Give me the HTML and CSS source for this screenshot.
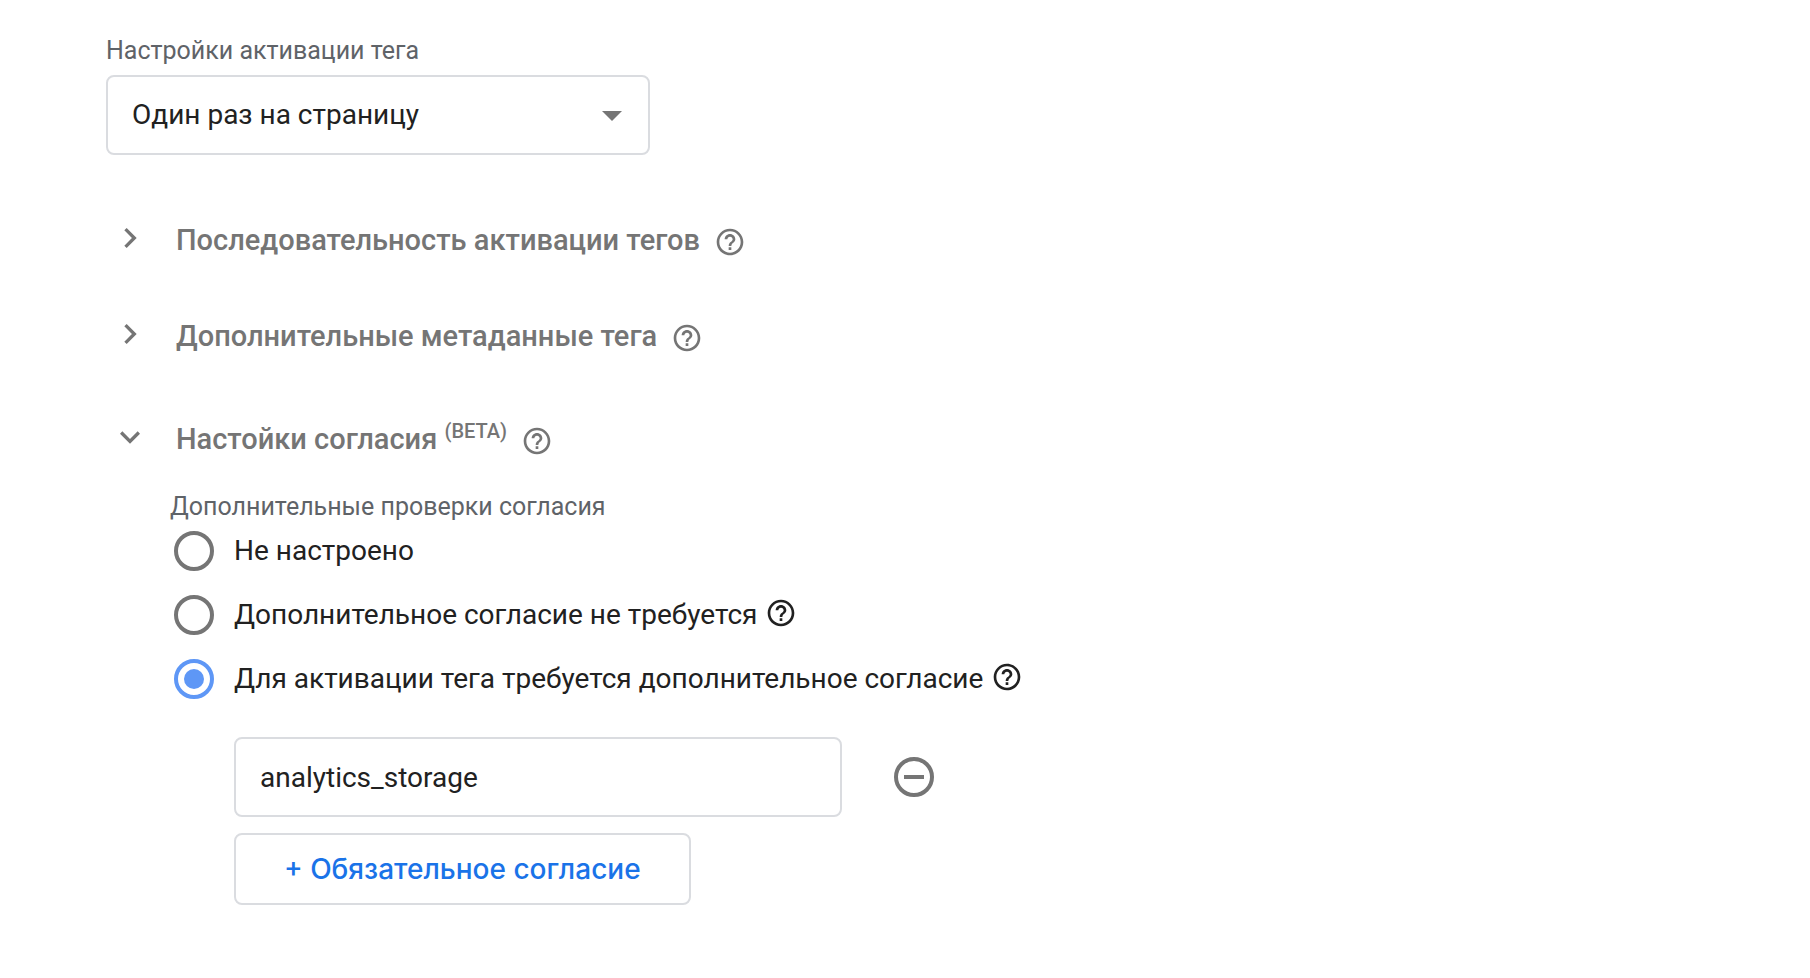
FILE: index.html
```
<!DOCTYPE html>
<html lang="ru">
<head>
  <meta charset="UTF-8" />
  <meta name="viewport" content="width=device-width, initial-scale=1.0"/>
  <title>Настройки тега</title>
  <link rel="stylesheet" href="styles.css">
</head>
<body>

  <!-- Shared icon shapes -->
  <svg class="icon-defs" aria-hidden="true">
    <symbol id="icon-help" viewBox="0 0 24 24">
      <path d="M11 18h2v-2h-2v2zm1-16C6.48 2 2 6.48 2 12s4.48 10 10 10 10-4.48 10-10S17.52 2 12 2zm0 18c-4.41 0-8-3.59-8-8s3.59-8 8-8 8 3.59 8 8-3.59 8-8 8zm0-14c-2.21 0-4 1.79-4 4h2c0-1.1.9-2 2-2s2 .9 2 2c0 2-3 1.75-3 5h2c0-2.25 3-2.5 3-5 0-2.21-1.79-4-4-4z"/>
    </symbol>
    <symbol id="icon-right" viewBox="0 0 24 24">
      <path d="M10 6L8.59 7.41 13.17 12l-4.58 4.59L10 18l6-6z"/>
    </symbol>
    <symbol id="icon-down" viewBox="0 0 24 24">
      <path d="M16.59 8.59L12 13.17 7.41 8.59 6 10l6 6 6-6z"/>
    </symbol>
  </svg>

  <main class="settings">

    <label class="field-label" for="firing">Настройки активации тега</label>
    <div class="select-wrap">
      <select class="select" id="firing">
        <option>Один раз на страницу</option>
      </select>
      <svg class="select-arrow" viewBox="0 0 20 10" aria-hidden="true"><path d="M0 0h20L10 10z"/></svg>
    </div>

    <div class="section">
      <button class="section-toggle" type="button" aria-expanded="false">
        <svg class="chevron" aria-hidden="true"><use href="#icon-right"/></svg>
        <span class="section-title">Последовательность активации тегов</span>
      </button>
      <button class="help" type="button" aria-label="Справка"><svg><use href="#icon-help"/></svg></button>
    </div>

    <div class="section">
      <button class="section-toggle" type="button" aria-expanded="false">
        <svg class="chevron" aria-hidden="true"><use href="#icon-right"/></svg>
        <span class="section-title">Дополнительные метаданные тега</span>
      </button>
      <button class="help" type="button" aria-label="Справка"><svg><use href="#icon-help"/></svg></button>
    </div>

    <div class="section section-open">
      <button class="section-toggle" type="button" aria-expanded="true">
        <svg class="chevron" aria-hidden="true"><use href="#icon-down"/></svg>
        <span class="section-title">Настойки согласия <sup class="beta">(BETA)</sup></span>
      </button>
      <button class="help" type="button" aria-label="Справка"><svg><use href="#icon-help"/></svg></button>
    </div>

    <fieldset class="consent">
      <legend class="field-label">Дополнительные проверки согласия</legend>

      <div class="radio-list">
        <div class="radio-row">
          <input class="radio" type="radio" name="consent" id="consent-unset">
          <label for="consent-unset">Не настроено</label>
        </div>
        <div class="radio-row">
          <input class="radio" type="radio" name="consent" id="consent-none">
          <label for="consent-none">Дополнительное согласие не требуется</label>
          <button class="help" type="button" aria-label="Справка"><svg><use href="#icon-help"/></svg></button>
        </div>
        <div class="radio-row">
          <input class="radio" type="radio" name="consent" id="consent-required" checked>
          <label for="consent-required">Для активации тега требуется дополнительное согласие</label>
          <button class="help" type="button" aria-label="Справка"><svg><use href="#icon-help"/></svg></button>
        </div>
      </div>

      <div class="required">
        <div class="required-row">
          <input class="text-input" type="text" value="analytics_storage" aria-label="Тип согласия">
          <button class="remove" type="button" aria-label="Удалить">
            <svg viewBox="0 0 40 40"><circle cx="20" cy="20" r="18"/><path d="M10 20h20"/></svg>
          </button>
        </div>
        <button class="add-button" type="button">+ Обязательное согласие</button>
      </div>
    </fieldset>

  </main>

</body>
</html>
```
FILE: styles.css
```
* {
  box-sizing: border-box;
}

body {
  margin: 0;
  background-color: #fff;
  color: #212121;
  font-family: Roboto, "Open Sans", sans-serif;
  font-size: 28px;
  line-height: 32px;
}

button, input, select {
  margin: 0;
  font: inherit;
  color: inherit;
}

button {
  padding: 0;
  border: none;
  background: none;
  cursor: pointer;
}

.icon-defs {
  display: none;
}

.settings {
  padding: 35px 106px;
}

.field-label {
  display: block;
  margin-bottom: 8px;
  padding: 0;
  font-size: 25px;
  color: #5f6368;
}

/* Drop-down */
.select-wrap {
  position: relative;
  max-width: 544px;
}

.select, .text-input {
  width: 100%;
  height: 80px;
  padding: 0 24px;
  border: 2px solid #dadce0;
  border-radius: 8px;
  background-color: #fff;
}

.select {
  appearance: none;
}

.select-arrow {
  position: absolute;
  top: 36px;
  right: 28px;
  width: 20px;
  height: 10px;
  fill: #757575;
  pointer-events: none;
}

/* Collapsible sections */
.section {
  display: flex;
  align-items: center;
  gap: 14px;
  margin-top: 56px;
  padding-left: 4px;
  color: #757575;
}

.select-wrap + .section, .section-open {
  margin-top: 63px;
}

.section-toggle {
  display: flex;
  align-items: center;
  gap: 26px;
  text-align: left;
}

.chevron {
  width: 40px;
  height: 40px;
  fill: currentColor;
}

.section-title {
  padding-top: 4px;
  font-size: 29px;
  font-weight: 500;
}

.beta {
  font-size: 20px;
  line-height: 0;
}

.help svg {
  display: block;
  width: 32px;
  height: 32px;
  fill: currentColor;
}

.section .help {
  margin-top: 8px;
}

/* Consent options */
.consent {
  margin: 34px 0 0 64px;
  padding: 0;
  border: none;
}

.radio-list {
  display: flex;
  flex-direction: column;
  gap: 24px;
  padding-left: 4px;
}

.radio-row {
  display: flex;
  align-items: center;
}

.radio {
  appearance: none;
  flex: none;
  width: 40px;
  height: 40px;
  margin-right: 20px;
  padding: 6px;
  border: 4px solid #757575;
  border-radius: 50%;
}

.radio:checked {
  border-color: #5e97f6;
  background: #5e97f6 content-box;
}

.radio-row .help {
  margin: 0 0 4px 8px;
}

.required {
  margin-top: 38px;
  padding-left: 64px;
}

.required-row {
  display: flex;
  align-items: center;
  gap: 52px;
  margin-bottom: 16px;
}

.text-input {
  max-width: 608px;
}

.remove svg {
  display: block;
  width: 40px;
  height: 40px;
  fill: none;
  stroke: #757575;
  stroke-width: 4;
}

.add-button {
  height: 72px;
  padding: 0 48px;
  border: 2px solid #dadce0;
  border-radius: 8px;
  color: #1a73e8;
  font-family: "Google Sans", Inter, Roboto, sans-serif;
  font-weight: 500;
}
```
